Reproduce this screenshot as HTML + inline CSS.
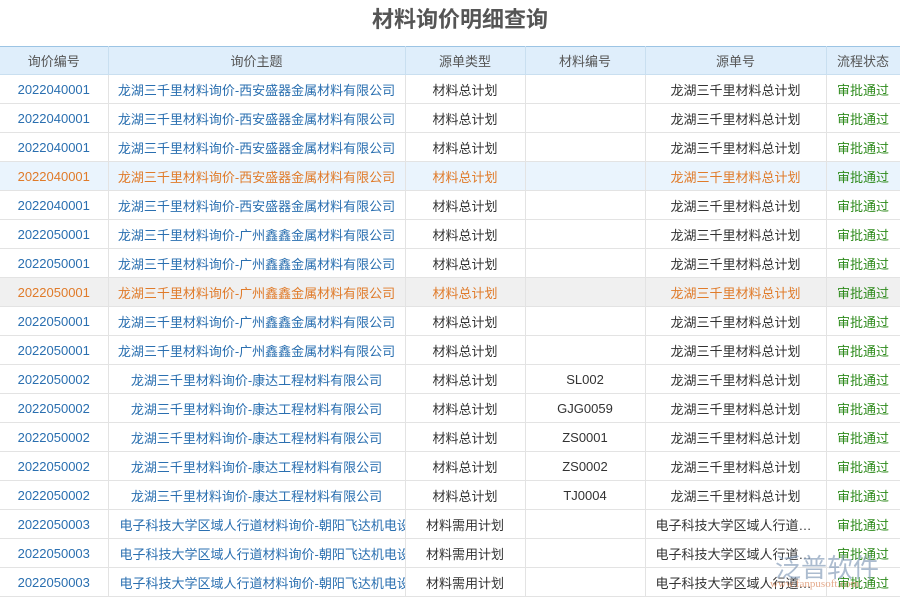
<!DOCTYPE html>
<html><head><meta charset="utf-8"><style>
body{margin:0;width:900px;height:598px;overflow:hidden;background:#fff;font-family:"Liberation Sans","Noto Sans CJK SC",sans-serif;}
h1{margin:0;height:46px;line-height:40px;text-align:center;font-size:22px;color:#555;font-weight:bold;padding-left:20px;}
table{border-collapse:collapse;table-layout:fixed;width:900px;font-size:13px;}
th{height:27px;padding:0;background:#dfeefb;color:#555;font-weight:normal;border-top:1px solid #9cc4e4;border-right:1px solid #c9dff0;border-bottom:1px solid #c9dff0;}
td{height:28px;padding:0;text-align:center;color:#333;border-right:1px solid #e3e3e3;border-bottom:1px solid #e3e3e3;white-space:nowrap;overflow:hidden;}
td.b{color:#2a6fb0}td.g{color:#2d8a1b}
td.l{text-align:left;padding-left:11px;text-overflow:clip}
td.e{text-align:left;padding-left:10px}
tr.h td{background:#eaf4fd}tr.s td{background:#f0f0f0}
tr.h td.o,tr.s td.o{color:#e07b2a}
.wm{position:absolute;left:775px;top:548px;color:#8aa0bc;font-size:26px;opacity:.7}
.wm2{position:absolute;left:770px;top:578px;color:#d9865a;font-size:11px;opacity:.7;font-family:"Liberation Serif",serif}
</style></head><body>
<h1>材料询价明细查询</h1>
<table>
<colgroup><col style="width:108px"><col style="width:297px"><col style="width:120px"><col style="width:120px"><col style="width:181px"><col style="width:74px"></colgroup>
<tr><th>询价编号</th><th>询价主题</th><th>源单类型</th><th>材料编号</th><th>源单号</th><th>流程状态</th></tr>
<tr><td class="b">2022040001</td><td class="b">龙湖三千里材料询价-西安盛器金属材料有限公司</td><td>材料总计划</td><td></td><td>龙湖三千里材料总计划</td><td class="g">审批通过</td></tr>
<tr><td class="b">2022040001</td><td class="b">龙湖三千里材料询价-西安盛器金属材料有限公司</td><td>材料总计划</td><td></td><td>龙湖三千里材料总计划</td><td class="g">审批通过</td></tr>
<tr><td class="b">2022040001</td><td class="b">龙湖三千里材料询价-西安盛器金属材料有限公司</td><td>材料总计划</td><td></td><td>龙湖三千里材料总计划</td><td class="g">审批通过</td></tr>
<tr class="h"><td class="b o">2022040001</td><td class="b o">龙湖三千里材料询价-西安盛器金属材料有限公司</td><td class="o">材料总计划</td><td></td><td class="o">龙湖三千里材料总计划</td><td class="g">审批通过</td></tr>
<tr><td class="b">2022040001</td><td class="b">龙湖三千里材料询价-西安盛器金属材料有限公司</td><td>材料总计划</td><td></td><td>龙湖三千里材料总计划</td><td class="g">审批通过</td></tr>
<tr><td class="b">2022050001</td><td class="b">龙湖三千里材料询价-广州鑫鑫金属材料有限公司</td><td>材料总计划</td><td></td><td>龙湖三千里材料总计划</td><td class="g">审批通过</td></tr>
<tr><td class="b">2022050001</td><td class="b">龙湖三千里材料询价-广州鑫鑫金属材料有限公司</td><td>材料总计划</td><td></td><td>龙湖三千里材料总计划</td><td class="g">审批通过</td></tr>
<tr class="s"><td class="b o">2022050001</td><td class="b o">龙湖三千里材料询价-广州鑫鑫金属材料有限公司</td><td class="o">材料总计划</td><td></td><td class="o">龙湖三千里材料总计划</td><td class="g">审批通过</td></tr>
<tr><td class="b">2022050001</td><td class="b">龙湖三千里材料询价-广州鑫鑫金属材料有限公司</td><td>材料总计划</td><td></td><td>龙湖三千里材料总计划</td><td class="g">审批通过</td></tr>
<tr><td class="b">2022050001</td><td class="b">龙湖三千里材料询价-广州鑫鑫金属材料有限公司</td><td>材料总计划</td><td></td><td>龙湖三千里材料总计划</td><td class="g">审批通过</td></tr>
<tr><td class="b">2022050002</td><td class="b">龙湖三千里材料询价-康达工程材料有限公司</td><td>材料总计划</td><td>SL002</td><td>龙湖三千里材料总计划</td><td class="g">审批通过</td></tr>
<tr><td class="b">2022050002</td><td class="b">龙湖三千里材料询价-康达工程材料有限公司</td><td>材料总计划</td><td>GJG0059</td><td>龙湖三千里材料总计划</td><td class="g">审批通过</td></tr>
<tr><td class="b">2022050002</td><td class="b">龙湖三千里材料询价-康达工程材料有限公司</td><td>材料总计划</td><td>ZS0001</td><td>龙湖三千里材料总计划</td><td class="g">审批通过</td></tr>
<tr><td class="b">2022050002</td><td class="b">龙湖三千里材料询价-康达工程材料有限公司</td><td>材料总计划</td><td>ZS0002</td><td>龙湖三千里材料总计划</td><td class="g">审批通过</td></tr>
<tr><td class="b">2022050002</td><td class="b">龙湖三千里材料询价-康达工程材料有限公司</td><td>材料总计划</td><td>TJ0004</td><td>龙湖三千里材料总计划</td><td class="g">审批通过</td></tr>
<tr><td class="b">2022050003</td><td class="b l">电子科技大学区域人行道材料询价-朝阳飞达机电设备有限公司</td><td>材料需用计划</td><td></td><td class="e">电子科技大学区域人行道…</td><td class="g">审批通过</td></tr>
<tr><td class="b">2022050003</td><td class="b l">电子科技大学区域人行道材料询价-朝阳飞达机电设备有限公司</td><td>材料需用计划</td><td></td><td class="e">电子科技大学区域人行道…</td><td class="g">审批通过</td></tr>
<tr><td class="b">2022050003</td><td class="b l">电子科技大学区域人行道材料询价-朝阳飞达机电设备有限公司</td><td>材料需用计划</td><td></td><td class="e">电子科技大学区域人行道…</td><td class="g">审批通过</td></tr>
</table>
<div class="wm">泛普软件</div>
<div class="wm2">www.fanpusoft.com</div>
</body></html>
